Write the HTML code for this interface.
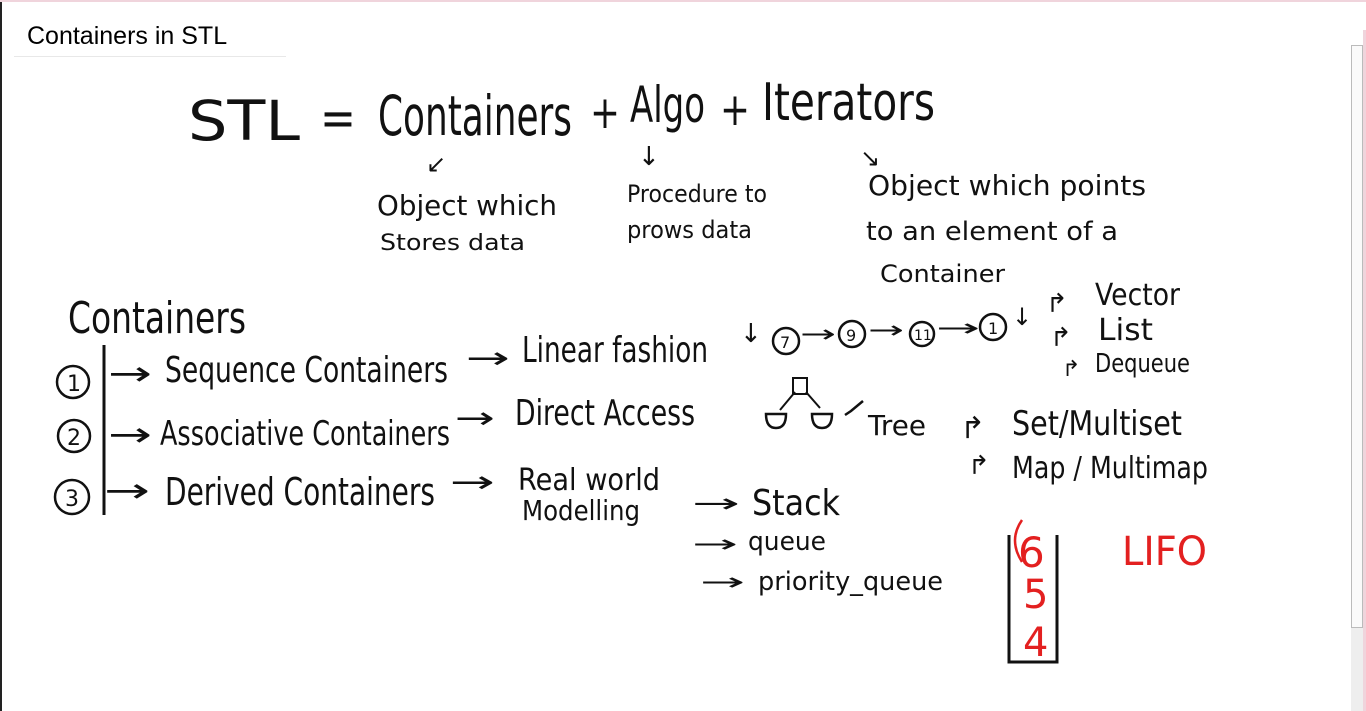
<!DOCTYPE html>
<html><head><meta charset="utf-8"><style>
html,body{margin:0;padding:0;width:1366px;height:711px;overflow:hidden;background:#fff;position:relative;font-family:"Liberation Sans",sans-serif}
svg{position:absolute;left:0;top:0}
svg text{font-family:"DejaVu Sans","Liberation Sans",sans-serif;fill:#111}
.r{fill:#e32020}
</style></head><body>
<div style="position:absolute;left:0;top:0;width:1366px;height:2px;background:#f0d4dc"></div>
<div style="position:absolute;left:0;top:2px;width:2px;height:709px;background:#222"></div>
<div style="position:absolute;left:27px;top:22px;font-size:25px;color:#000;white-space:nowrap">Containers in STL</div>
<div style="position:absolute;left:14px;top:56px;width:272px;height:1px;background:#e8e8e8"></div>
<div style="position:absolute;left:1351px;top:45px;width:12px;height:583px;border:1px solid #bbb;box-sizing:border-box;background:#fafafa"></div>
<div style="position:absolute;left:1351px;top:628px;width:12px;height:83px;background:#eee"></div>
<div style="position:absolute;left:1363px;top:30px;width:3px;height:681px;background:#f0d4dc"></div>

<svg width="1366" height="711" viewBox="0 0 1366 711">
<g lengthAdjust="spacingAndGlyphs">
<text x="188" y="140" font-size="55" textLength="112" lengthAdjust="spacingAndGlyphs">STL</text>
<text x="320" y="135" font-size="50" textLength="36" lengthAdjust="spacingAndGlyphs">=</text>
<text x="378" y="135" font-size="55" textLength="194" lengthAdjust="spacingAndGlyphs">Containers</text>
<text x="590" y="128" font-size="45" textLength="30" lengthAdjust="spacingAndGlyphs">+</text>
<text x="630" y="122" font-size="50" textLength="75" lengthAdjust="spacingAndGlyphs">Algo</text>
<text x="720" y="125" font-size="45" textLength="30" lengthAdjust="spacingAndGlyphs">+</text>
<text x="762" y="120" font-size="52" textLength="173" lengthAdjust="spacingAndGlyphs">Iterators</text>
<text x="426" y="172" font-size="24">↙</text>
<text x="638" y="165" font-size="26">↓</text>
<text x="860" y="166" font-size="24">↘</text>
<text x="377" y="215" font-size="28" textLength="180" lengthAdjust="spacingAndGlyphs">Object which</text>
<text x="380" y="250" font-size="22" textLength="145" lengthAdjust="spacingAndGlyphs">Stores data</text>
<text x="627" y="202" font-size="24" textLength="140" lengthAdjust="spacingAndGlyphs">Procedure to</text>
<text x="627" y="238" font-size="24" textLength="125" lengthAdjust="spacingAndGlyphs">prows data</text>
<text x="868" y="195" font-size="28" textLength="278" lengthAdjust="spacingAndGlyphs">Object which points</text>
<text x="866" y="240" font-size="26" textLength="252" lengthAdjust="spacingAndGlyphs">to an element of a</text>
<text x="880" y="282" font-size="24" textLength="125" lengthAdjust="spacingAndGlyphs">Container</text>

<text x="68" y="333" font-size="44" textLength="178" lengthAdjust="spacingAndGlyphs">Containers</text>
<line x1="104" y1="345" x2="104" y2="515" stroke="#111" stroke-width="3"/>
<circle cx="73" cy="382" r="16" fill="none" stroke="#111" stroke-width="2.5"/><text x="67" y="391" font-size="22">1</text>
<circle cx="74" cy="436" r="16" fill="none" stroke="#111" stroke-width="2.5"/><text x="67" y="445" font-size="22">2</text>
<circle cx="72" cy="497" r="17" fill="none" stroke="#111" stroke-width="2.5"/><text x="65" y="506" font-size="22">3</text>

<text x="108" y="385" font-size="34" textLength="44" lengthAdjust="spacingAndGlyphs">→</text>
<text x="165" y="382" font-size="36" textLength="283" lengthAdjust="spacingAndGlyphs">Sequence Containers</text>
<text x="466" y="368" font-size="30" textLength="44" lengthAdjust="spacingAndGlyphs">→</text>
<text x="522" y="362" font-size="36" textLength="186" lengthAdjust="spacingAndGlyphs">Linear fashion</text>

<text x="108" y="446" font-size="34" textLength="44" lengthAdjust="spacingAndGlyphs">→</text>
<text x="160" y="445" font-size="34" textLength="290" lengthAdjust="spacingAndGlyphs">Associative Containers</text>
<text x="455" y="428" font-size="30" textLength="40" lengthAdjust="spacingAndGlyphs">→</text>
<text x="515" y="425" font-size="36" textLength="180" lengthAdjust="spacingAndGlyphs">Direct Access</text>

<text x="104" y="502" font-size="34" textLength="46" lengthAdjust="spacingAndGlyphs">→</text>
<text x="165" y="505" font-size="38" textLength="270" lengthAdjust="spacingAndGlyphs">Derived Containers</text>
<text x="450" y="492" font-size="30" textLength="45" lengthAdjust="spacingAndGlyphs">→</text>
<text x="518" y="490" font-size="30" textLength="142" lengthAdjust="spacingAndGlyphs">Real world</text>
<text x="522" y="520" font-size="28" textLength="118" lengthAdjust="spacingAndGlyphs">Modelling</text>

<text x="740" y="342" font-size="26">↓</text>
<circle cx="786" cy="341" r="13" fill="none" stroke="#111" stroke-width="2.5"/><text x="780" y="348" font-size="16">7</text>
<text x="800" y="342" font-size="24" textLength="36" lengthAdjust="spacingAndGlyphs">→</text>
<circle cx="852" cy="334" r="13" fill="none" stroke="#111" stroke-width="2.5"/><text x="846" y="341" font-size="16">9</text>
<text x="868" y="338" font-size="24" textLength="36" lengthAdjust="spacingAndGlyphs">→</text>
<circle cx="922" cy="334" r="12" fill="none" stroke="#111" stroke-width="2.5"/><text x="914" y="340" font-size="14">11</text>
<text x="936" y="336" font-size="24" textLength="44" lengthAdjust="spacingAndGlyphs">→</text>
<circle cx="993" cy="327" r="13" fill="none" stroke="#111" stroke-width="2.5"/><text x="988" y="334" font-size="16">1</text>
<text x="1012" y="325" font-size="24">↓</text>

<text x="1046" y="312" font-size="26">↱</text>
<text x="1095" y="305" font-size="30" textLength="85" lengthAdjust="spacingAndGlyphs">Vector</text>
<text x="1050" y="346" font-size="26">↱</text>
<text x="1098" y="340" font-size="30" textLength="55" lengthAdjust="spacingAndGlyphs">List</text>
<text x="1062" y="376" font-size="22">↱</text>
<text x="1095" y="372" font-size="26" textLength="95" lengthAdjust="spacingAndGlyphs">Dequeue</text>

<rect x="793" y="378" width="14" height="16" fill="none" stroke="#111" stroke-width="2"/>
<line x1="795" y1="392" x2="780" y2="410" stroke="#111" stroke-width="2"/>
<line x1="806" y1="392" x2="820" y2="408" stroke="#111" stroke-width="2"/>
<path d="M766 414 h20 q0 14 -10 14 q-10 0 -10 -14z" fill="none" stroke="#111" stroke-width="2.5"/>
<path d="M812 414 h20 q0 14 -10 14 q-10 0 -10 -14z" fill="none" stroke="#111" stroke-width="2.5"/>
<path d="M845 415 l6 -4 l12 -10" fill="none" stroke="#111" stroke-width="2.5"/>
<text x="868" y="435" font-size="28" textLength="58" lengthAdjust="spacingAndGlyphs">Tree</text>

<text x="960" y="438" font-size="30">↱</text>
<text x="1012" y="435" font-size="34" textLength="170" lengthAdjust="spacingAndGlyphs">Set/Multiset</text>
<text x="968" y="474" font-size="26">↱</text>
<text x="1012" y="478" font-size="30" textLength="196" lengthAdjust="spacingAndGlyphs">Map / Multimap</text>

<text x="692" y="512" font-size="26" textLength="48" lengthAdjust="spacingAndGlyphs">→</text>
<text x="752" y="515" font-size="36" textLength="88" lengthAdjust="spacingAndGlyphs">Stack</text>
<text x="692" y="552" font-size="24" textLength="46" lengthAdjust="spacingAndGlyphs">→</text>
<text x="748" y="550" font-size="26" textLength="78" lengthAdjust="spacingAndGlyphs">queue</text>
<text x="700" y="590" font-size="24" textLength="45" lengthAdjust="spacingAndGlyphs">→</text>
<text x="758" y="590" font-size="26" textLength="185" lengthAdjust="spacingAndGlyphs">priority_queue</text>

<path d="M1009 535 V662 H1057 V535" fill="none" stroke="#111" stroke-width="3"/>
<text class="r" x="1018" y="567" font-size="42">6</text>
<path d="M1022 520 q-14 20 0 42" fill="none" stroke="#e32020" stroke-width="2.5"/>
<text class="r" x="1023" y="608" font-size="40">5</text>
<text class="r" x="1023" y="656" font-size="40">4</text>
<text class="r" x="1122" y="565" font-size="40" textLength="85" lengthAdjust="spacingAndGlyphs">LIFO</text>
</g>
</svg>
</body></html>
